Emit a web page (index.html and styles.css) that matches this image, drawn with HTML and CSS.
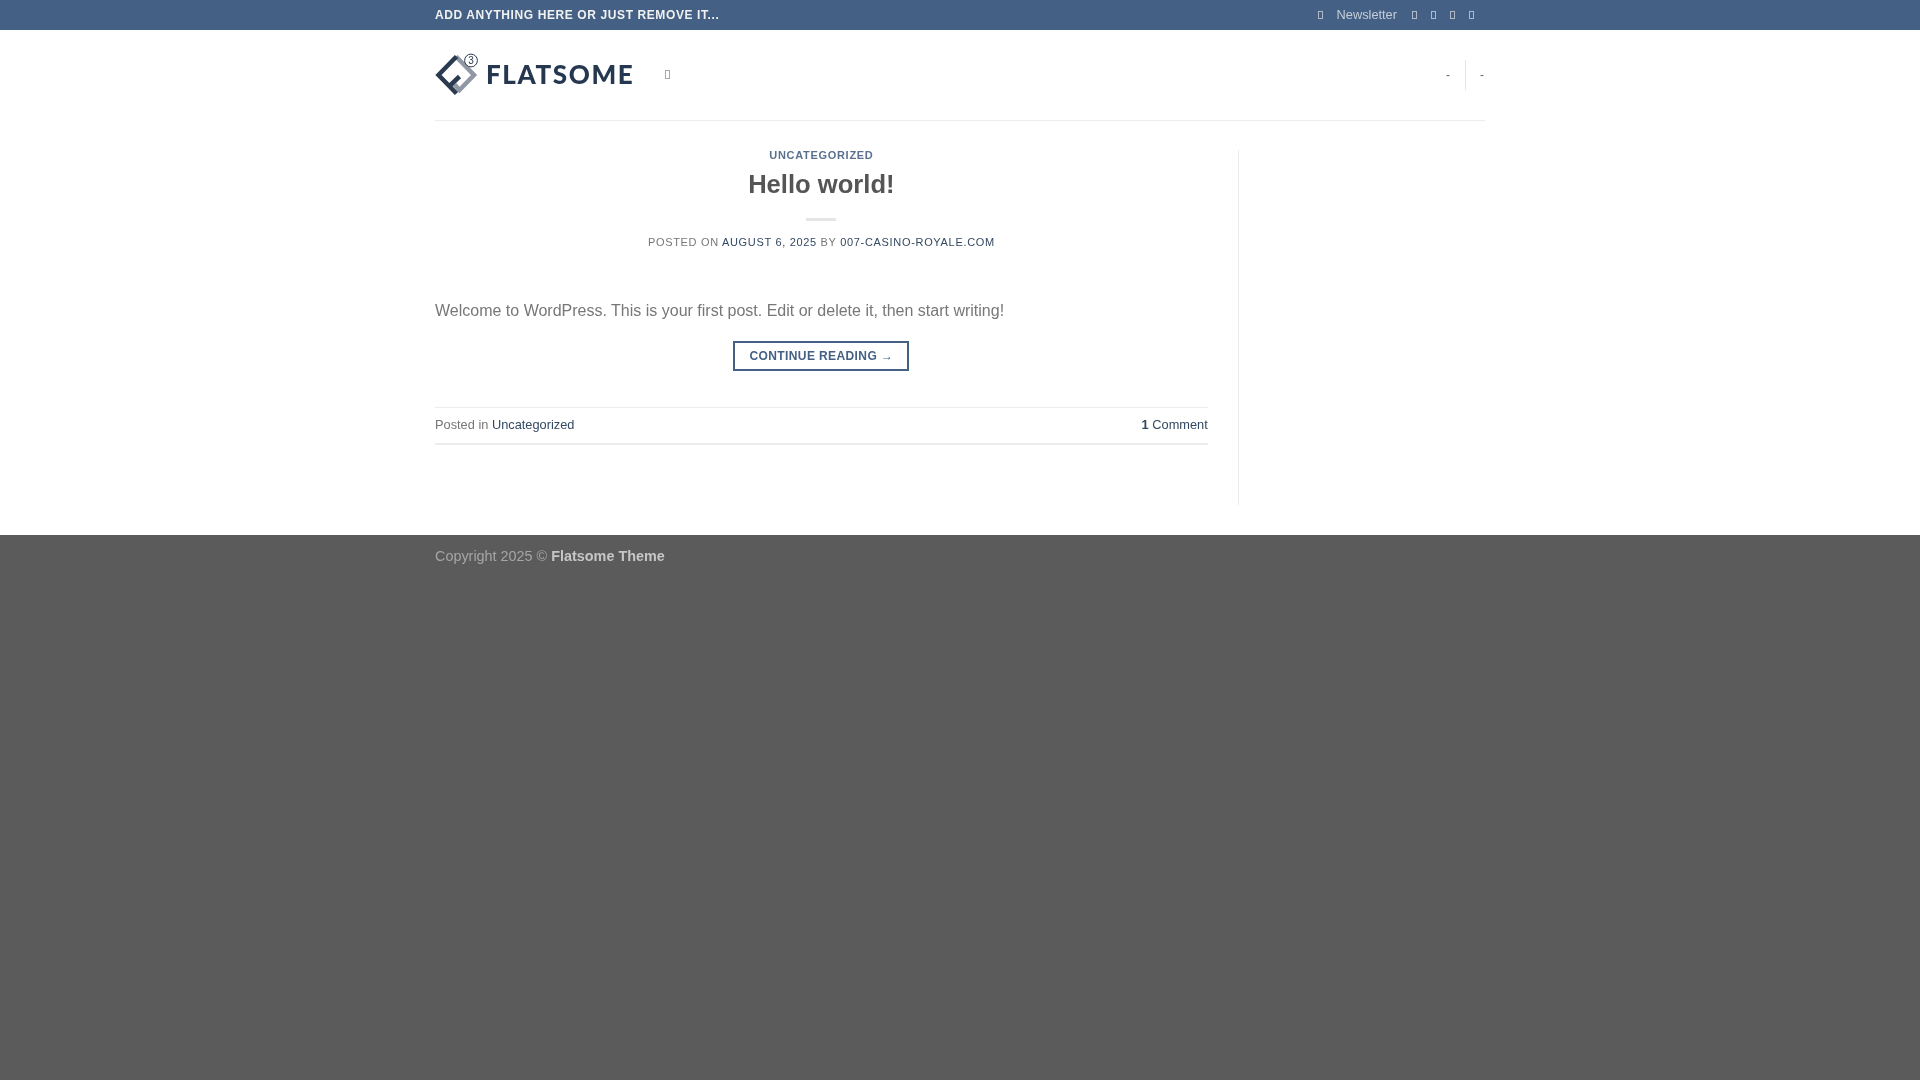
FILE: index.html
```html
<!DOCTYPE html>
<html lang="en">
<head>
    <meta charset="UTF-8">
    <meta name="viewport" content="width=device-width, initial-scale=1.0">
    <title>Flatsome</title>
    <link rel="stylesheet" href="styles.css">
</head>
<body>
    <div class="top-bar">
        <div class="container top-inner">
            <span class="top-text">ADD ANYTHING HERE OR JUST REMOVE IT...</span>
            <div class="top-links">
                <span class="tofu"></span>
                <a class="newsletter" href="#">Newsletter</a>
                <div class="socials">
                    <span class="tofu"></span>
                    <span class="tofu"></span>
                    <span class="tofu"></span>
                    <span class="tofu"></span>
                </div>
            </div>
        </div>
    </div>

    <header class="container header">
        <a class="logo" href="#">
            <svg class="logo-mark" width="44" height="44" viewBox="0 0 44 44">
                <path d="M21 3.5 L39 22 L24.5 37 L19.5 31.5" fill="none" stroke="#8f98a4" stroke-width="4.5"/>
                <path d="M21.5 3.5 L3.5 22 L21.5 40.5" fill="none" stroke="#2a3a50" stroke-width="4.5"/>
                <path d="M14.5 33 L24.5 23.5" fill="none" stroke="#2a3a50" stroke-width="4.5"/>
                <circle cx="36" cy="7.5" r="6.4" fill="#fff" stroke="#2a3a50" stroke-width="1"/>
                <text class="logo-three" x="36" y="11">3</text>
            </svg>
            <span class="logo-text">FLATSOME</span>
        </a>
        <span class="tofu tofu-dark"></span>
        <div class="header-right">
            <span class="dash">-</span>
            <span class="divider"></span>
            <span class="dash">-</span>
        </div>
    </header>

    <main class="container content">
        <article class="post">
            <a class="cat" href="#">UNCATEGORIZED</a>
            <h1>Hello world!</h1>
            <div class="title-bar"></div>
            <div class="meta">POSTED ON <a href="#">AUGUST 6, 2025</a> BY <a href="#">007-CASINO-ROYALE.COM</a></div>
            <p class="excerpt">Welcome to WordPress. This is your first post. Edit or delete it, then start writing!</p>
            <a class="more" href="#">CONTINUE READING <span class="arrow">→</span></a>
            <div class="post-footer">
                <span>Posted in <a href="#">Uncategorized</a></span>
                <a href="#"><strong>1</strong> Comment</a>
            </div>
        </article>
        <aside class="sidebar"></aside>
    </main>

    <footer class="footer">
        <div class="container">Copyright 2025 © <strong>Flatsome Theme</strong></div>
    </footer>
</body>
</html>
```

FILE: styles.css
```css
html, body {
    margin: 0;
    padding: 0;
    height: 100%;
}
body {
    display: flex;
    flex-direction: column;
    font-family: "Liberation Sans", Arial, sans-serif;
    font-size: 16px;
    color: #777;
    background: #fff;
}
a {
    color: #334862;
    text-decoration: none;
}
.container {
    width: 1050px;
    margin: 0 auto;
    will-change: transform;
}
/* top bar */
.top-bar {
    height: 30px;
    background: #446084;
}
.top-inner {
    height: 30px;
    display: flex;
    align-items: center;
    justify-content: space-between;
}
.top-text {
    font-size: 12px;
    font-weight: bold;
    letter-spacing: 0.6px;
    color: #f1f1f1;
}
.top-links {
    display: flex;
    align-items: center;
}
.newsletter {
    font-size: 12.8px;
    line-height: 14px;
    color: #c4cdd9;
    margin: -1px 15px 0 14px;
}
.socials {
    display: flex;
    gap: 14px;
    margin-right: 11px;
}
.tofu {
    display: block;
    box-sizing: border-box;
    width: 5px;
    height: 8px;
    border: 1px solid #aeb9c8;
}
.tofu-dark {
    width: 5px;
    height: 9px;
    border-color: #a8a8a8;
    margin: -1px 0 0 31px;
}
/* header */
.header {
    height: 91px;
    box-sizing: border-box;
    border-bottom: 1px solid #ececec;
    display: flex;
    align-items: center;
}
.logo {
    display: flex;
    align-items: center;
}
.logo-mark {
    display: block;
    margin-right: 7px;
}
.logo-three {
    font-size: 10px;
    fill: #2a3a50;
    text-anchor: middle;
}
.logo-text {
    font-family: Lato, sans-serif;
    font-weight: 900;
    font-size: 26px;
    line-height: 30px;
    letter-spacing: 1.6px;
    margin-top: -2px;
    color: #263850;
}
.header-right {
    margin-left: auto;
    margin-right: 1px;
    display: flex;
    align-items: center;
    height: 30px;
    font-size: 12px;
    color: #666;
}
.dash {
    margin-top: -1px;
}
.divider {
    width: 1px;
    height: 30px;
    background: #e6e6e6;
    margin: 0 14px 0 15px;
}
/* content */
.content {
    display: flex;
    padding-top: 29px;
    padding-bottom: 30px;
}
.post {
    width: 772.75px;
    text-align: center;
}
.cat {
    display: block;
    font-size: 11px;
    font-weight: bold;
    letter-spacing: 0.7px;
    line-height: 11px;
    color: #5a708f;
}
h1 {
    margin: 6px 0 0;
    font-size: 25.6px;
    line-height: 34px;
    color: #555;
}
.title-bar {
    width: 30px;
    height: 3px;
    margin: 17px auto 0;
    background: #e5e5e5;
}
.meta {
    margin-top: 15px;
    font-size: 11px;
    line-height: 13px;
    letter-spacing: 0.68px;
    color: #777;
}
.meta a {
    color: #334862;
}
.excerpt {
    margin: 50px 0 0;
    line-height: 24px;
    text-align: left;
}
.more {
    display: block;
    box-sizing: border-box;
    width: 176px;
    height: 30px;
    margin: 18px auto 0;
    border: 2px solid #446084;
    font-size: 12px;
    font-weight: bold;
    line-height: 26px;
    letter-spacing: 0.4px;
    color: #446084;
}
.arrow {
    font-weight: normal;
}
.post-footer {
    display: flex;
    justify-content: space-between;
    margin-top: 36px;
    height: 35px;
    border-top: 1px solid #ececec;
    border-bottom: 2px solid #ececec;
    font-size: 12.8px;
    line-height: 33px;
    text-align: left;
}
.sidebar {
    box-sizing: border-box;
    width: 247px;
    margin-left: 30.25px;
    border-left: 1px solid #ececec;
    height: 355px;
}
/* footer */
.footer {
    flex: 1;
    background: #5b5b5b;
    padding-top: 12px;
    font-size: 14.4px;
    line-height: 18px;
    color: #a5a5a5;
}
.footer strong {
    color: #c6c6c6;
}
```
